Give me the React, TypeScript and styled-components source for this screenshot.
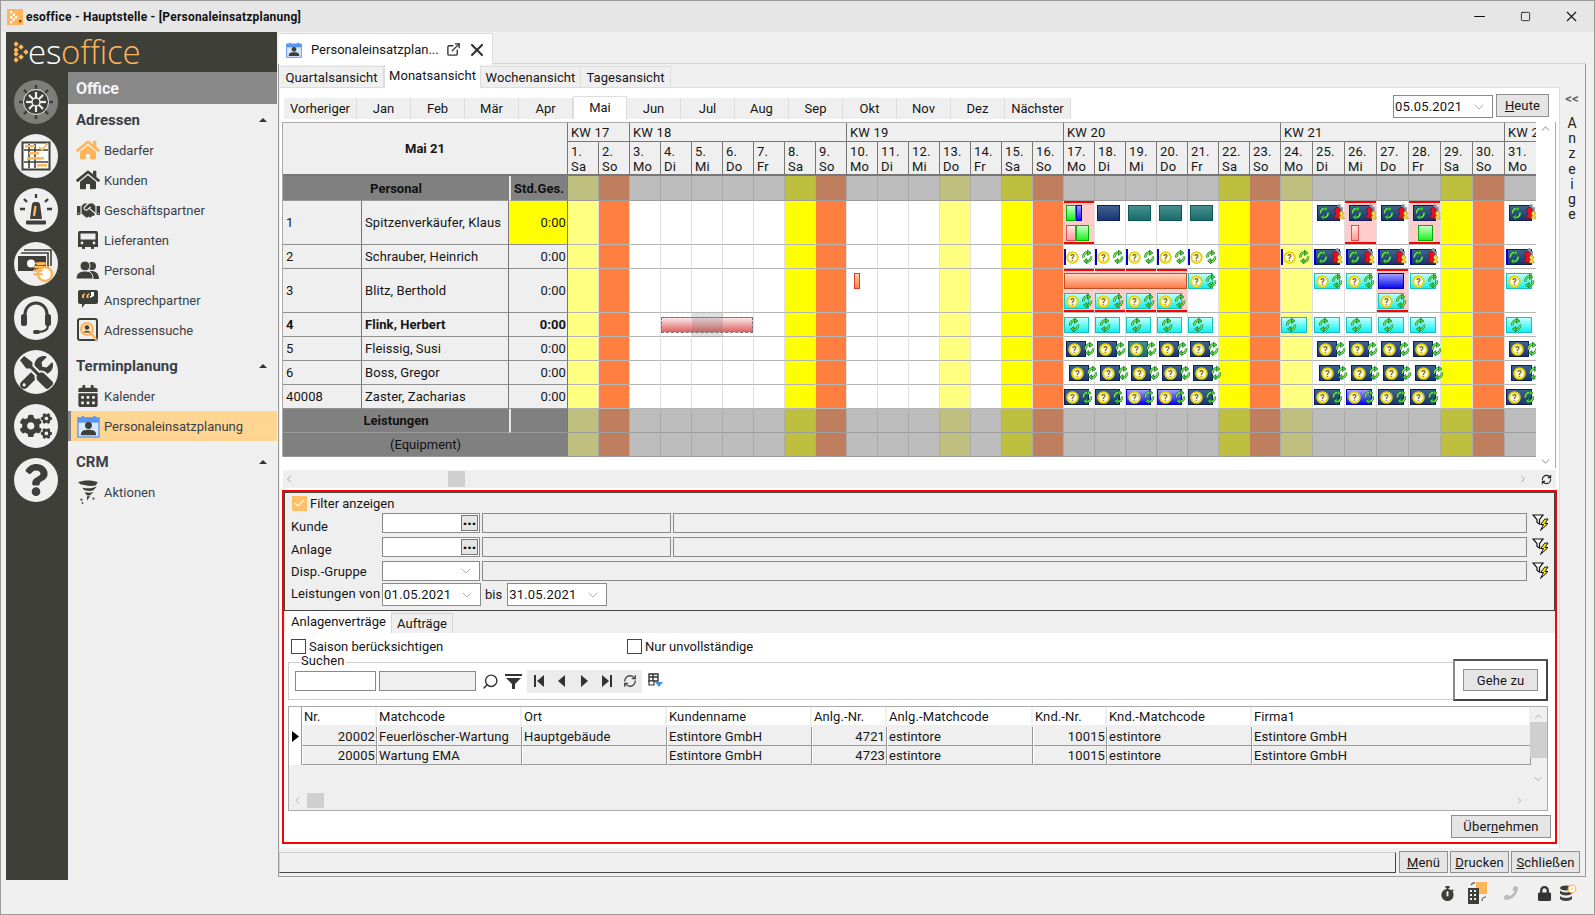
import React from "react";
import styled, { createGlobalStyle } from "styled-components";
import { ChevronUp, ChevronDown, ChevronLeft, ChevronRight, Check, X, Minus, Square, Search, RefreshCw, ExternalLink } from "lucide-react";
import { FaStopwatch, FaLock, FaPhoneAlt, FaTools, FaCogs, FaQuestion, FaHome, FaHandshake, FaCalendarAlt } from "react-icons/fa";

const GlobalStyle = createGlobalStyle`
  html, body { margin: 0; padding: 0; width: 1595px; height: 915px; overflow: hidden; background: #f0f0f0; }
  body { font-family: Roboto, "Liberation Sans", sans-serif; font-size: 13px; color: #151515; }
  * { box-sizing: border-box; }
`;

const DARK = "#3f3f3a";
const ORANGE = "#ffb55a";

const Win = styled.div`
  width: 1595px; height: 915px; border: 1px solid #9a9a9a; background: #f0f0f0;
  display: flex; flex-direction: column;
`;
const TitleBar = styled.div`
  height: 31px; flex: none; background: #e6e6e6; display: flex; align-items: center; padding-left: 6px;
`;
const TitleText = styled.div`
  margin-left: 3px; font-weight: 700; font-size: 12px; letter-spacing: 0.22px; color: #111; flex: 1;
`;
const WinCtl = styled.div`
  width: 46px; display: flex; justify-content: center; color: #111;
`;
const Body = styled.div`
  flex: 1; display: flex; padding-left: 5px; min-height: 0;
`;

/* Sidebar */
const Sidebar = styled.div`
  width: 271px; height: 848px; flex: none; display: flex; flex-direction: column;
`;
const LogoBar = styled.div`
  height: 40px; background: ${DARK}; display: flex; align-items: center; padding: 0 0 0 8px; gap: 0;
`;
const LogoText = styled.div`
  font-family: "Open Sans", Roboto, sans-serif; font-weight: 300; font-size: 33px; line-height: 40px; letter-spacing: -0.2px; color: #fff;
  span { color: ${ORANGE}; }
`;
const SideBody = styled.div`
  flex: 1; display: flex; min-height: 0;
`;
const Rail = styled.div`
  width: 62px; background: ${DARK}; display: flex; flex-direction: column; gap: 10px; padding: 8px 0 0 8px;
`;
const RailBtn = styled.div<{ $active?: boolean }>`
  width: 44px; height: 44px; border-radius: 50%; background: ${(p) => (p.$active ? "#7d7d7a" : "#efefef")};
  display: flex; align-items: center; justify-content: center; color: ${DARK}; flex: none;
`;
const Menu = styled.div`
  flex: 1; background: #efefef; display: flex; flex-direction: column;
`;
const MenuTop = styled.div`
  height: 32px; background: #888; color: #f4f4f4; font-weight: 700; font-size: 16px; display: flex; align-items: center; padding-left: 8px;
`;
const MenuHead = styled.div<{ $gap?: boolean }>`
  height: 30px; margin-top: ${(p) => (p.$gap ? "6px" : "1px")}; display: flex; align-items: center; padding: 0 10px 0 8px; justify-content: space-between;
  font-weight: 700; font-size: 15px; color: #3a3f48;
`;
const Caret = styled.div`
  width: 0; height: 0; border-left: 4px solid transparent; border-right: 4px solid transparent; border-bottom: 4px solid #333;
`;
const MenuItem = styled.div<{ $active?: boolean }>`
  height: 30px; display: flex; align-items: center; gap: 4px; padding-left: ${(p) => (p.$active ? "5px" : "8px")};
  background: ${(p) => (p.$active ? "#ffd591" : "transparent")};
  border-left: ${(p) => (p.$active ? "3px solid #888" : "0")};
  color: #3a3f4a; font-size: 13px;
`;
const MIcon = styled.div`
  width: 24px; height: 24px; display: flex; align-items: center; justify-content: center; color: ${DARK}; flex: none;
`;

/* Main */
const MainCol = styled.div`
  margin-left: 1px; width: 1308px; display: flex; flex-direction: column;
`;
const TabRow = styled.div`
  height: 32px; display: flex; flex: none;
`;
const DocTab = styled.div`
  width: 214px; margin-left: 1px; margin-top: 1px; height: 32px; background: #fff; border-top: 1px solid #ddd; border-right: 1px solid #ddd;
  display: flex; align-items: center; padding-left: 7px; position: relative; z-index: 1;
`;
const DocTitle = styled.div`
  margin-left: 9px; width: 133px; white-space: nowrap;
`;
const DocAct = styled.div`
  margin-left: 2px; display: flex; align-items: center; gap: 6px; color: #333;
`;
const TabRest = styled.div`
  flex: 1; border-bottom: 1px solid #d5d5d5;
`;
const Frame = styled.div`
  width: 1308px; height: 813px; flex: none; border-left: 1px solid #999; border-right: 1px solid #999; border-bottom: 1px solid #999;
  display: flex; flex-direction: column;
`;
const TopArea = styled.div`
  height: 784px; display: flex; flex: none;
`;
const TabCol = styled.div`
  width: 1281px; flex: none; display: flex; flex-direction: column;
`;
const SubTabs = styled.div`
  height: 23px; display: flex; padding: 2px 0 0 1px; flex: none;
`;
const SubTab = styled.div<{ $w: number; $active?: boolean }>`
  width: ${(p) => p.$w}px; display: flex; align-items: center; justify-content: center; letter-spacing: 0.05px;
  background: ${(p) => (p.$active ? "#fff" : "#efefef")};
  border-top: 1px solid #ddd; border-right: 1px solid #ddd;
  ${(p) => p.$active && "margin-top: -2px; height: 24px; padding-bottom: 2px; position: relative; border-left: 1px solid #ddd;"}
`;
const WhitePanel = styled.div`
  margin-left: 1px; flex: 1; background: #fff; border-top: 1px solid #ddd; border-right: 1px solid #ddd; padding-top: 6px; display: flex; flex-direction: column;
`;
const CalRow = styled.div`
  height: 25px; flex: none; display: flex; padding: 0 10px 0 4px;
`;
const CalTabs = styled.div`
  display: flex; flex: 1; padding-top: 4px;
`;
const CalTab = styled.div<{ $w: number; $active?: boolean }>`
  width: ${(p) => p.$w}px; display: flex; align-items: center; justify-content: center;
  background: ${(p) => (p.$active ? "#fff" : "#efefef")};
  border-right: 1px solid #ddd;
  ${(p) => (p.$active ? "margin-top:-2px; border-top:1px solid #ddd; border-left:1px solid #ddd; padding-bottom: 2px;" : "")}
`;
const Combo = styled.div<{ $w: number; $h?: number; $top?: number }>`
  width: ${(p) => p.$w}px; height: ${(p) => p.$h ?? 23}px; border: 1px solid #8a8a8a; background: #fff; display: flex; align-items: center;
  margin-top: ${(p) => p.$top ?? 0}px;
  justify-content: space-between; padding: 0 5px 0 1px; flex: none; color: #8a8a8a; letter-spacing: 0.2px;
  span { color: #151515; }
`;
const Btn = styled.div<{ $w: number; $h?: number }>`
  width: ${(p) => p.$w}px; height: ${(p) => p.$h ?? 23}px; flex: none; background: #e5e5e5; border: 1px solid #8f8f8f;
  display: flex; align-items: center; justify-content: center; letter-spacing: 0.15px;
`;
const HeuteWrap = styled.div`
  margin-left: 3px;
`;

/* Grid */
const GridArea = styled.div`
  height: 348px; flex: none; margin: 3px 3px 0 3px; display: flex;
`;
const Gantt = styled.div`
  display: grid; height: 335px; border-left: 1px solid #aaa; border-top: 1px solid #aaa; margin-left: -1px;
  grid-template-columns: 79px 147px 59px repeat(23, 31px) repeat(8, 32px);
  grid-template-rows: 19px 34px 25px 44px 24px 44px 24px 24px 24px 24px 24px 24px;
  overflow: hidden; width: 1255px;
`;
const HeadCorner = styled.div`
  grid-column: 1 / span 3; grid-row: 1 / span 2; background: #efefef; display: flex; align-items: center; justify-content: center;
  font-weight: 700; border-bottom: 2px solid #777; border-right: 1px solid #777;
`;
const KwCell = styled.div<{ $span: number }>`
  grid-column: span ${(p) => p.$span}; background: #efefef; border-right: 1px solid #777; border-bottom: 1px solid #777;
  display: flex; align-items: center; padding-left: 3px; white-space: nowrap; overflow: hidden; letter-spacing: 0.2px;
`;
const DayHead = styled.div`
  background: #efefef; border-right: 1px solid #777; border-bottom: 2px solid #777; padding: 2px 0 0 3px; line-height: 15px; letter-spacing: 0.2px;
`;
const GrayHead = styled.div<{ $span: number; $bold?: boolean; $sep?: boolean }>`
  grid-column: span ${(p) => p.$span}; background: #808080; display: flex; align-items: center; justify-content: center;
  font-weight: ${(p) => (p.$bold ? 700 : 400)}; border-bottom: 1px solid #999; color: #111;
  ${(p) => (p.$sep ? "border-left: 2px solid #e8e8e8; border-right: 1px solid #777;" : "")}
`;
const LeftCell = styled.div<{ $bold?: boolean; $right?: boolean; $hi?: boolean }>`
  background: ${(p) => (p.$hi ? "#ffff00" : "#efefef")}; border-right: 1px solid #777; border-bottom: 1px solid #909090;
  display: flex; align-items: center; padding: 0 ${(p) => (p.$right ? "1px" : "3px")} 0 3px; justify-content: ${(p) => (p.$right ? "flex-end" : "flex-start")};
  font-weight: ${(p) => (p.$bold ? 700 : 400)}; letter-spacing: 0.08px; white-space: nowrap;
`;
const tint = { n: "#fff", h: "#ffff80", s: "#ffff00", u: "#ff7f40" };
const greyTint = { n: "#bdbdbd", h: "#bfbf80", s: "#bfbf3f", u: "#bf7f5f" };
const DayCell = styled.div<{ $bg: string; $pink?: boolean; $grey?: boolean }>`
  background: ${(p) => (p.$pink ? "#ffcccc" : p.$bg)};
  border-right: 1px solid ${(p) => (p.$grey ? "#aaa" : "#e0e0e0")};
  border-bottom: 1px solid ${(p) => (p.$grey ? "#9c9c9c" : "#b5b5b5")};
  ${(p) => (p.$pink ? "box-shadow: inset 0 2px 0 #f00, inset 0 -2px 0 #f00;" : "")}
  padding-top: 4px; display: flex; flex-direction: column; gap: 4px;
`;
const EvLine = styled.div`
  display: flex; height: 16px; flex: none;
`;
const toneCss: Record<string, string> = {
  navy: "border: 1px solid #0c1f5a; background: linear-gradient(#3f6290,#1a3572);",
  teal: "border: 1px solid #0a5a5a; background: linear-gradient(#468f8f,#1c6c6c);",
  blue: "border: 1px solid #0000c0; background: linear-gradient(#a0a0ff,#0808e8);",
  cyan: "border: 1px solid #14c0c0; background: linear-gradient(#c4ffff,#10f0f0);",
  green: "border: 1px solid #00b000; background: linear-gradient(#c8ffc8,#20f020);",
  sblue: "border: 1px solid #0000c0; background: linear-gradient(#a0a0ff,#1010f0);",
  pink: "border: 1px solid #e05050; background: linear-gradient(#ffe8e8,#ff9a9a);",
  orange: "border: 1px solid #c05020; background: linear-gradient(#ffd8c0,#ff7a48);",
  small: "border: 1px solid #e04020; background: linear-gradient(#ffd0a0,#ff8050);",
  dash: "border: 1px dashed #777; background: linear-gradient(#fbe6e6,#dd6060);",
  none: "",
};
const EvBar = styled.div<{ $tone: string; $x: number; $w: number; $stripe?: boolean; $pad: number }>`
  position: relative; z-index: 2; flex: none; margin-left: ${(p) => p.$x}px; width: ${(p) => p.$w}px; height: 16px;
  display: flex; align-items: center; padding-left: ${(p) => p.$pad}px; gap: 3px;
  ${(p) => toneCss[p.$tone]}
  ${(p) => (p.$stripe ? "border-left: 2px solid #0000d0;" : "")}
  svg { flex: none; }
`;
const DayTint = styled.div`
  position: absolute; left: 30px; top: -5px; width: 31px; height: 24px; background: rgba(120,120,120,0.24);
`;
const VScroll = styled.div`
  width: 20px; height: 346px; border-right: 1px solid #aaa; display: flex; flex-direction: column; justify-content: space-between; align-items: center; color: #b0b0b0; padding: 0;
`;
const HScrollBar = styled.div`
  height: 18px; flex: none; margin: 0 3px; background: #efefef; display: flex; align-items: center; color: #aaa;
`;
const HThumb = styled.div<{ $m: number; $w: number; $h: number }>`
  margin-left: ${(p) => p.$m}px; width: ${(p) => p.$w}px; height: ${(p) => p.$h}px; background: #cfcfcf; flex: none;
`;
const Spacer = styled.div`
  flex: 1;
`;
const RedBox = styled.div`
  height: 354px; flex: none; margin: 2px 2px 4px 2px; border: 2px solid #f00; display: flex; flex-direction: column; background: #fff;
`;
const FilterPanel = styled.div`
  height: 119px; flex: none; background: #efefef; border: 1px solid #444; padding: 2px 4px 0 6px; display: flex; flex-direction: column; gap: 4px;
`;
const FCheckRow = styled.div`
  display: flex; align-items: center; height: 16px; gap: 3px; padding-left: 1px; margin-bottom: -2px;
`;
const OrangeCheck = styled.div`
  width: 15px; height: 15px; background: #ffbf66; color: #fff; display: flex; align-items: center; justify-content: center;
`;
const FRow = styled.div<{ $h?: number; $mt?: number }>`
  display: flex; align-items: center; height: ${(p) => p.$h ?? 20}px; flex: none; gap: 2px; margin-top: ${(p) => p.$mt ?? 0}px;
`;
const FLabel = styled.div<{ $pt?: number; $pb?: number }>`
  width: 89px; flex: none; letter-spacing: 0.1px; white-space: nowrap; padding-top: ${(p) => p.$pt ?? 0}px; padding-bottom: ${(p) => p.$pb ?? 0}px;
`;
const Input = styled.div<{ $w: number; $off?: boolean; $h?: number; $ml?: number }>`
  ${(p) => (p.$w ? `width: ${p.$w}px;flex: none;` : "flex: 1;")} height: ${(p) => p.$h ?? 20}px; border: 1px solid #8a8a8a; background: ${(p) => (p.$off ? "#efefef" : "#fff")};
  margin-left: ${(p) => p.$ml ?? 0}px;
  display: flex; justify-content: flex-end; align-items: stretch;
`;
const DotsBtn = styled.div`
  width: 17px; background: #e5e5e5; border: 1px solid #777; font-weight: 900; font-size: 15px; line-height: 9px; text-align: center; margin: 1px; color: #000; overflow: hidden;
`;
const FIconWrap = styled.div`
  margin-left: 3px; display: flex; align-items: center; width: 18px; flex: none;
`;
const BisLabel = styled.div`
  margin: 0 3px 0 2px;
`;
const InnerTabs = styled.div`
  height: 22px; flex: none; background: #efefef; display: flex; padding: 2px 0 0 2px;
`;
const InnerTab = styled.div<{ $w: number; $active?: boolean }>`
  width: ${(p) => p.$w}px; display: flex; align-items: center; justify-content: center;
  background: ${(p) => (p.$active ? "#fff" : "#efefef")};
  ${(p) => (p.$active ? "margin-top:-2px; padding-bottom: 2px;" : "border: 1px solid #d5d5d5; border-bottom: 0;")}
`;
const OptionRow = styled.div`
  height: 15px; margin: 6px 0 0 7px; display: flex; align-items: center; flex: none;
`;
const CheckOpt = styled.div<{ $w?: number }>`
  display: flex; align-items: center; gap: 3px; ${(p) => (p.$w ? `width: ${p.$w}px;` : "")}
`;
const CheckBox = styled.div`
  width: 15px; height: 15px; background: #fff; border: 1px solid #444;
`;
const SearchRow = styled.div`
  display: flex; margin: 5px 7px 0 4px; flex: none; height: 42px;
`;
const Group = styled.div`
  position: relative; margin-top: 3px; height: 38px; width: 1166px; border: 1px solid #ccc; border-right: 0; display: flex; align-items: center; padding-left: 6px;
`;
const Legend = styled.div`
  position: absolute; left: 11px; top: -9px; background: #fff; line-height: 14px; padding: 0 1px; letter-spacing: 0.1px;
`;
const ToolIcons = styled.div`
  margin-left: 6px; display: flex; align-items: center; gap: 6px; color: #333;
`;
const NavGroup = styled.div`
  margin-left: 5px; height: 23px; width: 115px; background: #ececec; display: flex; align-items: center; justify-content: space-around; padding: 0 1px;
`;
const GoBox = styled.div`
  width: 95px; height: 42px; flex: none; background: #fff; border: 2px solid #444; border-left-color: #888; border-top-color: #555;
  display: flex; align-items: center; justify-content: center;
`;
const TableWrap = styled.div`
  margin: 5px 7px 0 4px; height: 105px; flex: none; background: #efefef; border: 1px solid #aaa; display: flex;
`;
const TableMain = styled.div`
  flex: 1; display: flex; flex-direction: column; min-width: 0;
`;
const TGrid = styled.div`
  display: grid; grid-template-columns: 13px 75px 145px 145px 145px 75px 146px 74px 145px 279px;
  grid-template-rows: 20px 19px 19px; flex: none; background: #efefef;
`;
const THead = styled.div`
  background: #fff; border-right: 2px solid #efefef; border-bottom: 2px solid #efefef; display: flex; align-items: center; padding-left: 2px; letter-spacing: 0.1px;
`;
const TIndicator = styled.div`
  display: flex; align-items: center; justify-content: center; border-right: 1px solid #999; background: #fff;
`;
const TCell = styled.div<{ $r?: boolean }>`
  border-right: 1px solid #999; border-bottom: 1px solid #999; display: flex; align-items: center; padding: 0 1px 0 1px;
  justify-content: ${(p) => (p.$r ? "flex-end" : "flex-start")}; letter-spacing: 0.12px; border-left: 1px solid #fff; white-space: nowrap;
`;
const TScroll = styled.div`
  height: 18px; margin-top: auto; margin-bottom: 1px; display: flex; align-items: center; color: #aaa; padding-left: 3px; flex: none;
`;
const TVScroll = styled.div`
  width: 18px; flex: none; display: flex; flex-direction: column; align-items: center; color: #aaa; padding-top: 4px;
`;
const TVThumb = styled.div`
  width: 17px; height: 36px; background: #cfcfcf; flex: none;
`;
const DownArrow = styled.div`
  margin-top: 15px;
`;
const ApplyRow = styled.div`
  display: flex; justify-content: flex-end; margin: 4px 4px 0 0; flex: none;
`;
const AnzeigeRail = styled.div`
  flex: 1; display: flex; flex-direction: column; align-items: center; padding: 27px 1px 0 0; color: #222;
`;
const Chevs = styled.div`
  font-size: 13px; font-weight: 700; color: #666; height: 25px; line-height: 16px; letter-spacing: 0;
`;
const VLetter = styled.div`
  line-height: 15.2px; font-size: 14px;
`;
const BottomBar = styled.div`
  height: 28px; flex: none; display: flex; padding-top: 3px; gap: 2px;
`;
const StatusBox = styled.div`
  width: 1117px; height: 21px; margin-top: 1px; border: 1px solid #d0d0d0; border-bottom-color: #444; border-right-color: #444; margin-right: 1px;
`;
const Footer = styled.div`
  flex: 1; display: flex; align-items: center; padding-bottom: 5px; padding-left: 1159px;
`;
const FootIcon = styled.div<{ $w: number; $ml?: number }>`
  width: ${(p) => p.$w}px; margin-left: ${(p) => p.$ml ?? 0}px; display: flex; justify-content: center; flex: none;
`;

/* ---- small drawings ---- */
const SyncG = ({ x = 0 }: { x?: number }) => (
  <g transform={`translate(${x} 1.5)`}>
    <g fill="none">
      <path d="M1.5 7 A4.2 4.2 0 0 1 7 2.2" stroke="#0c6a12" strokeWidth="2.4" />
      <path d="M9 6 A4.2 4.2 0 0 1 3.5 10.8" stroke="#0c6a12" strokeWidth="2.4" />
      <path d="M1.5 7 A4.2 4.2 0 0 1 7 2.2" stroke="#7aea5a" strokeWidth="1.5" />
      <path d="M9 6 A4.2 4.2 0 0 1 3.5 10.8" stroke="#7aea5a" strokeWidth="1.5" />
    </g>
    <path d="M5.5 -0.5 L9 2.6 L5.5 5 Z" fill="#4ad03f" stroke="#0c6a12" strokeWidth=".6" />
    <path d="M5 13.5 L1.5 10.4 L5 8 Z" fill="#4ad03f" stroke="#0c6a12" strokeWidth=".6" />
  </g>
);
const Sync = () => (
  <svg width="11" height="16" viewBox="0 0 11 16" style={{ overflow: "visible" }}><SyncG /></svg>
);
const Q = () => (
  <svg width="13" height="13" viewBox="0 0 13 13">
    <circle cx="6.5" cy="6.5" r="5.3" fill="#fffbe4" stroke="#e6d410" strokeWidth="2" />
    <text x="6.5" y="9.6" textAnchor="middle" fontSize="9" fontWeight="700" fill="#7a6a00" fontFamily="Roboto, sans-serif">?</text>
  </svg>
);
const Full = () => (
  <svg width="32" height="16" viewBox="0 0 32 16" style={{ overflow: "visible" }}>
    <SyncG x={0} />
    <path d="M22 2 a2 2 0 1 1 4 0 v2 h3 l-1 9 h-6 z" fill="#8a94a4" transform="translate(1 -1) scale(.8)" />
    <path d="M15.5 13.5 v-3 l1.6 -2.5 a3 3 0 1 1 2.8 0 l1.6 2.5 v3 z" fill="#e8101c" stroke="#4a0a0a" strokeWidth=".5" />
    <path d="M20.5 14 v-2 l1.2 -1.6 a2.2 2.2 0 1 1 2.2 0 l1.2 1.6 v2 z" fill="#ecd94a" stroke="#8a7a10" strokeWidth=".4" />
  </svg>
);
const icons = {
  q: <><Q /><Sync /></>,
  s: <Sync />,
  f: <Full />,
};

type Ev = { t: string; x?: number; w: number; i?: "q" | "s" | "f"; st?: boolean };
type Cell = { pink?: boolean; lines: (Ev | null)[] };

const ev = (t: string, x: number, w: number, i?: "q" | "s" | "f", st?: boolean): Ev => ({ t, x, w, i, st });
const one = (e: Ev): Cell => ({ lines: [e] });

const rowData: Record<number, Cell>[] = [
  {
    17: { pink: true, lines: [null, null] },
    18: one(ev("navy", 2, 23)), 19: one(ev("teal", 2, 23)), 20: one(ev("teal", 2, 23)), 21: one(ev("teal", 2, 23)),
    25: one(ev("navy", 4, 23, "f")),
    26: { pink: true, lines: [ev("navy", 4, 23, "f"), ev("pink", 6, 8)] },
    27: one(ev("navy", 4, 23, "f")),
    28: { pink: true, lines: [ev("navy", 4, 23, "f"), ev("green", 9, 15)] },
    31: one(ev("navy", 4, 23, "f")),
  },
  {
    17: one(ev("none", 0, 24, "q", true)), 18: one(ev("none", 0, 24, "q", true)), 19: one(ev("none", 0, 24, "q", true)),
    20: one(ev("none", 0, 24, "q", true)), 21: one(ev("none", 0, 24, "q", true)), 24: one(ev("none", 0, 24, "q", true)),
    25: one(ev("navy", 1, 26, "f", true)), 26: one(ev("navy", 1, 26, "f", true)), 27: one(ev("navy", 1, 26, "f", true)),
    28: one(ev("navy", 1, 26, "f", true)), 31: one(ev("navy", 1, 26, "f", true)),
  },
  {
    10: one(ev("small", 7, 6)),
    17: { pink: true, lines: [ev("orange", 0, 123), ev("cyan", 0, 25, "q")] },
    18: { pink: true, lines: [null, ev("cyan", 0, 25, "q")] },
    19: { pink: true, lines: [null, ev("cyan", 0, 25, "q")] },
    20: { pink: true, lines: [null, ev("cyan", 0, 25, "q")] },
    21: one(ev("cyan", 0, 25, "q")),
    25: one(ev("cyan", 1, 26, "q")), 26: one(ev("cyan", 1, 26, "q")),
    27: { pink: true, lines: [ev("blue", 1, 26), ev("cyan", 1, 26, "q")] },
    28: one(ev("cyan", 1, 26, "q")), 31: one(ev("cyan", 1, 26, "q")),
  },
  {
    4: one(ev("dash", 0, 92)),
    17: one(ev("cyan", 0, 25, "s")), 18: one(ev("cyan", 0, 25, "s")), 19: one(ev("cyan", 0, 25, "s")),
    20: one(ev("cyan", 0, 25, "s")), 21: one(ev("cyan", 0, 25, "s")),
    24: one(ev("cyan", 0, 26, "s")), 25: one(ev("cyan", 1, 26, "s")), 26: one(ev("cyan", 1, 26, "s")),
    27: one(ev("cyan", 1, 26, "s")), 28: one(ev("cyan", 1, 26, "s")), 31: one(ev("cyan", 1, 26, "s")),
  },
  {
    17: one(ev("navy", 2, 20, "q")), 18: one(ev("navy", 2, 20, "q")), 19: one(ev("teal", 2, 20, "q")),
    20: one(ev("navy", 2, 20, "q")), 21: one(ev("navy", 2, 20, "q")),
    25: one(ev("navy", 4, 20, "q")), 26: one(ev("navy", 4, 20, "q")), 27: one(ev("navy", 4, 20, "q")),
    28: one(ev("navy", 4, 20, "q")), 31: one(ev("navy", 4, 20, "q")),
  },
  {
    17: one(ev("navy", 5, 20, "q")), 18: one(ev("navy", 5, 20, "q")), 19: one(ev("navy", 5, 20, "q")),
    20: one(ev("navy", 5, 20, "q")), 21: one(ev("navy", 5, 20, "q")),
    25: one(ev("navy", 6, 21, "q")), 26: one(ev("navy", 6, 21, "q")), 27: one(ev("navy", 6, 21, "q")),
    28: one(ev("navy", 6, 21, "q")), 31: one(ev("navy", 6, 21, "q")),
  },
  {
    17: one(ev("navy", 0, 25, "q")), 18: one(ev("navy", 0, 25, "q")), 19: one(ev("blue", 0, 25, "q")),
    20: one(ev("blue", 0, 25, "q")), 21: one(ev("navy", 0, 25, "q")),
    25: one(ev("navy", 1, 26, "q")), 26: one(ev("blue", 1, 26, "q")), 27: one(ev("navy", 1, 26, "q")),
    28: one(ev("navy", 1, 26, "q")), 31: one(ev("navy", 1, 26, "q")),
  },
];

const persons = [
  { id: "1", name: "Spitzenverkäufer, Klaus", hi: true },
  { id: "2", name: "Schrauber, Heinrich" },
  { id: "3", name: "Blitz, Berthold" },
  { id: "4", name: "Flink, Herbert", bold: true },
  { id: "5", name: "Fleissig, Susi" },
  { id: "6", name: "Boss, Gregor" },
  { id: "40008", name: "Zaster, Zacharias" },
];

const wd = ["Sa", "So", "Mo", "Di", "Mi", "Do", "Fr"];
const days = Array.from({ length: 31 }, (_, i) => ({ n: i + 1, w: wd[i % 7] }));
const kindOf = (d: number): keyof typeof tint =>
  [1, 13, 24].includes(d) ? "h" : [8, 15, 22, 29].includes(d) ? "s" : [2, 9, 16, 23, 30].includes(d) ? "u" : "n";

const EvView = ({ e }: { e: Ev }) => (
  <EvBar $tone={e.t} $x={e.x ?? 0} $w={e.w} $stripe={e.st} $pad={e.i === "s" ? 4 : e.t === "none" ? 0 : 1}>
    {e.i ? icons[e.i] : null}
    {e.t === "dash" ? <DayTint /> : null}
  </EvBar>
);

const ComboArrow = () => <ChevronDown size={16} strokeWidth={1} />;

const FilterIcon = () => (
  <svg width="18" height="18" viewBox="0 0 18 18">
    <path d="M1 1 H11 L7.5 5.5 V10 L5 8.5 V5.5 Z" fill="#fff" stroke="#111" strokeWidth="1.2" />
    <path d="M13 5 L8.5 10.5 H11.5 L8.5 16.5 L16 9.5 H13 L16 5 Z" fill="#ffee00" stroke="#111" strokeWidth="1" />
  </svg>
);

const NavIcon = ({ d }: { d: string }) => (
  <svg width="14" height="14" viewBox="0 0 14 14"><path d={d} fill="#333" /></svg>
);

const GridFilterIcon = () => (
  <svg width="16" height="16" viewBox="0 0 16 16">
    <path d="M1 1 H10 V8 H1 Z M1 4 H10 M5 1 V8" fill="#fff" stroke="#333" strokeWidth="1.4" />
    <path d="M1 8 H6 V12 H1 Z" fill="#fff" stroke="#333" strokeWidth="1.2" />
    <path d="M7 9 H15 L11 14 Z" fill="#4a90e2" />
  </svg>
);

/* Sidebar drawings */
const Wheel = () => (
  <svg width="36" height="36" viewBox="0 0 36 36">
    <g stroke={DARK} strokeWidth="2.5">
      {[0, 45, 90, 135, 180, 225, 270, 315].map((a) => (
        <line key={a} x1="18" y1="5" x2="18" y2="1" transform={`rotate(${a} 18 18)`} />
      ))}
    </g>
    <circle cx="18" cy="18" r="12.5" fill={DARK} stroke="#e8e8e8" strokeWidth="1" />
    <g stroke="#eee" strokeWidth="2.2">
      {[0, 45, 90, 135].map((a) => (
        <line key={a} x1="18" y1="8" x2="18" y2="28" transform={`rotate(${a} 18 18)`} />
      ))}
    </g>
    <circle cx="18" cy="18" r="4" fill={DARK} stroke="#eee" strokeWidth="1.4" />
  </svg>
);
const Board = () => (
  <svg width="30" height="30" viewBox="0 0 30 30">
    <rect x="1.5" y="1.5" width="27" height="27" fill="#fff" stroke={DARK} strokeWidth="2" />
    <g stroke={DARK} strokeWidth="1.6"><path d="M8 3 V27 M14 3 V27 M3 9 H27 M3 21 H27" /></g>
    <g fill={ORANGE}><rect x="4" y="4" width="10" height="2.6" /><rect x="8" y="11" width="10" height="2.6" /><rect x="6" y="16" width="17" height="2.6" /><rect x="16" y="23" width="10" height="2.6" /></g>
    <path d="M18 6 l3 3 l6 -7" fill="none" stroke={ORANGE} strokeWidth="1.8" />
  </svg>
);
const Siren = () => (
  <svg width="34" height="34" viewBox="0 0 34 34">
    <path d="M11 26 L13 11 A3 3 0 0 1 16 9 H18 A3 3 0 0 1 21 11 L23 26 Z" fill={DARK} />
    <rect x="7" y="27.5" width="20" height="4" rx="1" fill={DARK} />
    <path d="M16.5 13 L15 23" stroke={ORANGE} strokeWidth="2.4" />
    <g stroke={DARK} strokeWidth="2.4"><path d="M17 1 V5 M5 6 L8 9 M29 6 L26 9 M1 16 H6 M28 16 H33" /></g>
  </svg>
);
const Money = () => (
  <svg width="38" height="38" viewBox="0 0 38 38">
    <g fill="none" stroke={DARK} strokeWidth="1.6"><path d="M7 5 H34 V21 M4 8 H31 V24" /></g>
    <rect x="1" y="11" width="28" height="15" fill={DARK} />
    <ellipse cx="14" cy="18.5" rx="4" ry="4" fill="#fff" />
    <circle cx="28" cy="29" r="7" fill="#fff" stroke={ORANGE} strokeWidth="2.5" />
    <g fill={ORANGE}><ellipse cx="24" cy="18.5" rx="6" ry="1.6" /><ellipse cx="22" cy="22" rx="6" ry="1.6" /><ellipse cx="21" cy="25.5" rx="5" ry="1.6" /><ellipse cx="21" cy="29" rx="5" ry="1.6" /></g>
  </svg>
);
const Headset = () => (
  <svg width="34" height="34" viewBox="0 0 34 34">
    <path d="M6 19 V13 A11 11 0 0 1 28 13 V19" fill="none" stroke={DARK} strokeWidth="3" />
    <rect x="2" y="13" width="6" height="12" rx="2.5" fill={DARK} />
    <rect x="26" y="13" width="6" height="12" rx="2.5" fill={DARK} />
    <path d="M29 24 C29 29 25 31 19 31" fill="none" stroke={DARK} strokeWidth="2.2" />
    <rect x="14" y="29" width="7" height="4" rx="2" fill={DARK} />
  </svg>
);
const Truck = () => (
  <svg width="22" height="20" viewBox="0 0 22 20">
    <path d="M3 1 H19 A2 2 0 0 1 21 3 V17 H17 V19 H14 V17 H8 V19 H5 V17 H1 V3 A2 2 0 0 1 3 1 Z" fill={DARK} />
    <rect x="3.5" y="3.5" width="15" height="6" fill="#efefef" />
    <circle cx="5" cy="13" r="1.4" fill="#efefef" /><circle cx="17" cy="13" r="1.4" fill="#efefef" />
  </svg>
);
const People = () => (
  <svg width="24" height="20" viewBox="0 0 24 20">
    <circle cx="16" cy="6" r="4" fill={DARK} /><path d="M11 19 C11 13 13 11 16 11 C19 11 23 13 23 19 Z" fill={DARK} />
    <circle cx="9" cy="6" r="5" fill={DARK} stroke="#efefef" /><path d="M0 19 C0 13 4 11 9 11 C14 11 17 13 17 19 Z" fill={DARK} stroke="#efefef" />
  </svg>
);
const Quote = () => (
  <svg width="22" height="22" viewBox="0 0 22 22">
    <path d="M3 1 H19 A2 2 0 0 1 21 3 V13 A2 2 0 0 1 19 15 H8 L5 19 V15 H3 A2 2 0 0 1 1 13 V3 A2 2 0 0 1 3 1 Z" fill={DARK} />
    <g fill={ORANGE}><path d="M5 9 V6 L8 4 V6 H7 V9 Z M9.5 9 V6 L12.5 4 V6 H11.5 V9 Z" /></g>
    <g fill="#fff"><path d="M17 3 V7 L13 9 V7 H14 V3 Z" /></g>
  </svg>
);
const AddrSearch = () => (
  <svg width="22" height="24" viewBox="0 0 22 24">
    <rect x="1" y="1" width="19" height="21" rx="2" fill="#efefef" stroke={DARK} strokeWidth="2" />
    <circle cx="10" cy="11" r="6" fill="#ffdca8" stroke={ORANGE} strokeWidth="2" />
    <circle cx="10" cy="9.5" r="2.2" fill={DARK} /><path d="M6.5 14.5 C7 12.5 13 12.5 13.5 14.5 Z" fill={DARK} />
    <path d="M14.5 16 L19.5 22" stroke={ORANGE} strokeWidth="2.4" />
  </svg>
);
const Tornado = () => (
  <svg width="22" height="24" viewBox="0 0 20 22">
    <g fill={DARK}>
      <path d="M1 2 C6 0 14 0 19 2 L17 5 C12 6 7 5 3 4 Z" />
      <path d="M5 7 C8 8 13 8 18 6 L15 9.5 C12 10.5 8 10 6 9 Z" />
      <path d="M7 11 C10 12 12 12 15 11 L12 14 C10 14.5 9 14 8 13 Z" />
      <path d="M9 15 L12 15 L9 19 Z" />
      <circle cx="4" cy="18" r="1" /><circle cx="15" cy="17" r="1" /><circle cx="5" cy="21" r=".8" />
    </g>
  </svg>
);
const PersonCal = ({ s }: { s: number }) => (
  <svg width={s} height={s} viewBox="0 0 24 24">
    <rect x="1" y="3" width="22" height="20" fill="#d8e8ff" stroke="#5a96ef" strokeWidth="1.4" />
    <rect x="1" y="3" width="22" height="5" fill="#5a96ef" />
    <rect x="5" y="1" width="2.4" height="4.5" fill="#5a96ef" /><rect x="17" y="1" width="2.4" height="4.5" fill="#5a96ef" />
    <circle cx="12" cy="11" r="3.6" fill={DARK} /><path d="M4 21 C4 16 8 15.5 12 15.5 C16 15.5 20 16 20 21 Z" fill={DARK} />
  </svg>
);
const Building = () => (
  <svg width="22" height="24" viewBox="0 0 22 24">
    <rect x="9" y="1" width="11" height="12" fill={ORANGE} />
    <rect x="1" y="7" width="11" height="16" fill={DARK} />
    <g fill="#f0f0f0"><rect x="3" y="9" width="2" height="2" /><rect x="7" y="9" width="2" height="2" /><rect x="3" y="13" width="2" height="2" /><rect x="7" y="13" width="2" height="2" /><rect x="3" y="17" width="2" height="2" /><rect x="7" y="17" width="2" height="2" /></g>
    <path d="M4 4 A4 4 0 0 1 8 2 M15 20 A4 4 0 0 1 19 16" fill="none" stroke="#555" strokeWidth="1.2" />
  </svg>
);
const Db = () => (
  <svg width="18" height="18" viewBox="0 0 18 18">
    <ellipse cx="7" cy="4" rx="6" ry="2.6" fill={DARK} />
    <path d="M1 6.5 C3 9 11 9 13 6.5 V9.5 C11 12 3 12 1 9.5 Z" fill={DARK} />
    <path d="M1 12 C3 14.5 11 14.5 13 12 V15 C11 17.5 3 17.5 1 15 Z" fill={DARK} />
    <circle cx="13" cy="5" r="3.8" fill="#fff" stroke={ORANGE} strokeWidth="1.2" />
    <path d="M13 3 V5 H15" fill="none" stroke={ORANGE} strokeWidth=".9" />
  </svg>
);
const LogoMark = () => (
  <svg width="14" height="22" viewBox="0 0 14 22">
    <g fill={ORANGE}>
      {[[2, 3], [7, 6], [12, 11], [7, 16], [2, 19], [2, 9], [2, 13]].map(([x, y], i) => (
        <rect key={i} x={x - 2} y={y - 2} width="4" height="4" transform={`rotate(45 ${x} ${y})`} />
      ))}
    </g>
  </svg>
);
const TitleIcon = () => (
  <svg width="16" height="16" viewBox="0 0 16 16">
    <rect width="16" height="16" fill="#ffb55a" />
    <g fill="#fff"><rect x="3" y="2" width="2.4" height="2.4" /><rect x="5.6" y="4.6" width="2.4" height="2.4" /><rect x="8" y="7" width="2.4" height="2.4" /><rect x="5.6" y="9.4" width="2.4" height="2.4" /><rect x="3" y="12" width="2.4" height="2.4" /><rect x="3" y="7" width="2.4" height="2.4" /></g>
    <rect x="12" y="11" width="2.4" height="2.4" fill="#7a5a20" />
  </svg>
);

const months = ["Jan", "Feb", "Mär", "Apr", "Mai", "Jun", "Jul", "Aug", "Sep", "Okt", "Nov", "Dez"];

const tableCols = ["Nr.", "Matchcode", "Ort", "Kundenname", "Anlg.-Nr.", "Anlg.-Matchcode", "Knd.-Nr.", "Knd.-Matchcode", "Firma1"];
const tableRows = [
  ["20002", "Feuerlöscher-Wartung", "Hauptgebäude", "Estintore GmbH", "4721", "estintore", "10015", "estintore", "Estintore GmbH"],
  ["20005", "Wartung EMA", "", "Estintore GmbH", "4723", "estintore", "10015", "estintore", "Estintore GmbH"],
];
const rightCols = [0, 4, 6];

const renderDayCells = (r: number) => {
  const data = rowData[r];
  return days.map((d) => {
    const c = data[d.n];
    const kind = kindOf(d.n);
    return (
      <DayCell key={d.n} $bg={tint[kind]} $pink={c?.pink}>
        {r === 0 && d.n === 17 ? (
          <>
            <EvLine>
              <EvBar $tone="green" $x={2} $w={10} $pad={0} />
              <EvBar $tone="sblue" $x={0} $w={6} $pad={0} />
            </EvLine>
            <EvLine>
              <EvBar $tone="pink" $x={2} $w={10} $pad={0} />
              <EvBar $tone="green" $x={0} $w={13} $pad={0} />
            </EvLine>
          </>
        ) : c ? (
          c.lines.map((e, i) => <EvLine key={i}>{e ? <EvView e={e} /> : null}</EvLine>)
        ) : null}
      </DayCell>
    );
  });
};

export default function App() {
  return (
    <>
      <GlobalStyle />
      <Win>
        <TitleBar>
          <TitleIcon />
          <TitleText>esoffice - Hauptstelle - [Personaleinsatzplanung]</TitleText>
          <WinCtl><Minus size={17} strokeWidth={1.5} /></WinCtl>
          <WinCtl><Square size={11} strokeWidth={1.8} /></WinCtl>
          <WinCtl><X size={17} strokeWidth={1.5} /></WinCtl>
        </TitleBar>
        <Body>
          <Sidebar>
            <LogoBar>
              <LogoMark />
              <LogoText>es<span>office</span></LogoText>
            </LogoBar>
            <SideBody>
              <Rail>
                <RailBtn $active><Wheel /></RailBtn>
                <RailBtn><Board /></RailBtn>
                <RailBtn><Siren /></RailBtn>
                <RailBtn><Money /></RailBtn>
                <RailBtn><Headset /></RailBtn>
                <RailBtn><FaTools size={33} /></RailBtn>
                <RailBtn><FaCogs size={32} /></RailBtn>
                <RailBtn><FaQuestion size={32} /></RailBtn>
              </Rail>
              <Menu>
                <MenuTop>Office</MenuTop>
                <MenuHead>Adressen<Caret /></MenuHead>
                <MenuItem><MIcon><FaHome size={24} color={ORANGE} /></MIcon>Bedarfer</MenuItem>
                <MenuItem><MIcon><FaHome size={24} /></MIcon>Kunden</MenuItem>
                <MenuItem><MIcon><FaHandshake size={23} /></MIcon>Geschäftspartner</MenuItem>
                <MenuItem><MIcon><Truck /></MIcon>Lieferanten</MenuItem>
                <MenuItem><MIcon><People /></MIcon>Personal</MenuItem>
                <MenuItem><MIcon><Quote /></MIcon>Ansprechpartner</MenuItem>
                <MenuItem><MIcon><AddrSearch /></MIcon>Adressensuche</MenuItem>
                <MenuHead $gap>Terminplanung<Caret /></MenuHead>
                <MenuItem><MIcon><FaCalendarAlt size={22} /></MIcon>Kalender</MenuItem>
                <MenuItem $active><MIcon><PersonCal s={23} /></MIcon>Personaleinsatzplanung</MenuItem>
                <MenuHead $gap>CRM<Caret /></MenuHead>
                <MenuItem><MIcon><Tornado /></MIcon>Aktionen</MenuItem>
              </Menu>
            </SideBody>
          </Sidebar>
          <MainCol>
            <TabRow>
              <DocTab>
                <PersonCal s={16} />
                <DocTitle>Personaleinsatzplan...</DocTitle>
                <DocAct>
                  <ExternalLink size={15} strokeWidth={2.2} />
                  <X size={20} strokeWidth={2.6} />
                </DocAct>
              </DocTab>
              <TabRest />
            </TabRow>
            <Frame>
              <TopArea>
                <TabCol>
                  <SubTabs>
                    <SubTab $w={104}>Quartalsansicht</SubTab>
                    <SubTab $w={97} $active>Monatsansicht</SubTab>
                    <SubTab $w={100}>Wochenansicht</SubTab>
                    <SubTab $w={90}>Tagesansicht</SubTab>
                  </SubTabs>
                  <WhitePanel>
                    <CalRow>
                      <CalTabs>
                        <CalTab $w={73}>Vorheriger</CalTab>
                        {months.map((m) => (
                          <CalTab key={m} $w={54} $active={m === "Mai"}>{m}</CalTab>
                        ))}
                        <CalTab $w={66}>Nächster</CalTab>
                      </CalTabs>
                      <Combo $w={100} $top={1}><span>05.05.2021</span><ComboArrow /></Combo>
                      <HeuteWrap><Btn $w={53}><u>H</u>eute</Btn></HeuteWrap>
                    </CalRow>
                    <GridArea>
                      <Gantt>
                        <HeadCorner>Mai 21</HeadCorner>
                        <KwCell $span={2}>KW 17</KwCell>
                        <KwCell $span={7}>KW 18</KwCell>
                        <KwCell $span={7}>KW 19</KwCell>
                        <KwCell $span={7}>KW 20</KwCell>
                        <KwCell $span={7}>KW 21</KwCell>
                        <KwCell $span={1}>KW 2</KwCell>
                        {days.map((d) => (
                          <DayHead key={d.n}>{d.n}.<br />{d.w}</DayHead>
                        ))}
                        <GrayHead $span={2} $bold>Personal</GrayHead>
                        <GrayHead $span={1} $bold $sep>Std.Ges.</GrayHead>
                        {days.map((d) => (
                          <DayCell key={d.n} $bg={greyTint[kindOf(d.n)]} $grey />
                        ))}
                        {persons.map((p, r) => (
                          <React.Fragment key={p.id}>
                            <LeftCell $bold={p.bold}>{p.id}</LeftCell>
                            <LeftCell $bold={p.bold}>{p.name}</LeftCell>
                            <LeftCell $bold={p.bold} $right $hi={p.hi}>0:00</LeftCell>
                            {renderDayCells(r)}
                          </React.Fragment>
                        ))}
                        <GrayHead $span={2} $bold>Leistungen</GrayHead>
                        <GrayHead $span={1} $sep />
                        {days.map((d) => (
                          <DayCell key={d.n} $bg={greyTint[kindOf(d.n)]} $grey />
                        ))}
                        <GrayHead $span={3}>(Equipment)</GrayHead>
                        {days.map((d) => (
                          <DayCell key={d.n} $bg={greyTint[kindOf(d.n)]} $grey />
                        ))}
                      </Gantt>
                      <VScroll>
                        <ChevronUp size={13} strokeWidth={2} />
                        <ChevronDown size={13} strokeWidth={2} />
                      </VScroll>
                    </GridArea>
                    <HScrollBar>
                      <ChevronLeft size={12} strokeWidth={2} />
                      <HThumb $m={153} $w={17} $h={16} />
                      <Spacer />
                      <ChevronRight size={12} strokeWidth={2} />
                      <RefreshCw size={11} strokeWidth={2.4} color="#222" style={{ margin: "0 4px 0 12px" }} />
                    </HScrollBar>
                    <RedBox>
                      <FilterPanel>
                        <FCheckRow>
                          <OrangeCheck><Check size={13} strokeWidth={2} /></OrangeCheck>
                          Filter anzeigen
                        </FCheckRow>
                        <FRow>
                          <FLabel $pt={6}>Kunde</FLabel>
                          <Input $w={98}><DotsBtn>...</DotsBtn></Input>
                          <Input $w={189} $off />
                          <Input $w={0} $off />
                          <FIconWrap><FilterIcon /></FIconWrap>
                        </FRow>
                        <FRow>
                          <FLabel $pt={4}>Anlage</FLabel>
                          <Input $w={98}><DotsBtn>...</DotsBtn></Input>
                          <Input $w={189} $off />
                          <Input $w={0} $off />
                          <FIconWrap><FilterIcon /></FIconWrap>
                        </FRow>
                        <FRow>
                          <FLabel>Disp.-Gruppe</FLabel>
                          <Combo $w={98} $h={20}><span /><ComboArrow /></Combo>
                          <Input $w={0} $off />
                          <FIconWrap><FilterIcon /></FIconWrap>
                        </FRow>
                        <FRow $h={23} $mt={-2}>
                          <FLabel $pb={3}>Leistungen von</FLabel>
                          <Combo $w={99}><span>01.05.2021</span><ComboArrow /></Combo>
                          <BisLabel>bis</BisLabel>
                          <Combo $w={100}><span>31.05.2021</span><ComboArrow /></Combo>
                        </FRow>
                      </FilterPanel>
                      <InnerTabs>
                        <InnerTab $w={105} $active>Anlagenverträge</InnerTab>
                        <InnerTab $w={62}>Aufträge</InnerTab>
                      </InnerTabs>
                      <OptionRow>
                        <CheckOpt $w={336}><CheckBox />Saison berücksichtigen</CheckOpt>
                        <CheckOpt><CheckBox />Nur unvollständige</CheckOpt>
                      </OptionRow>
                      <SearchRow>
                        <Group>
                          <Legend>Suchen</Legend>
                          <Input $w={81} />
                          <Input $w={97} $off $ml={3} />
                          <ToolIcons>
                            <Search size={17} strokeWidth={2} style={{ transform: "scaleX(-1)" }} />
                            <svg width="17" height="15" viewBox="0 0 17 15"><path d="M0 0 H17 V2 H0 Z M1 4 H16 L10 10 V15 H7 V10 Z" fill="#333" /></svg>
                          </ToolIcons>
                          <NavGroup>
                            <NavIcon d="M2 1 H4 V13 H2 Z M12 1 V13 L5 7 Z" />
                            <NavIcon d="M10 1 V13 L3 7 Z" />
                            <NavIcon d="M4 1 V13 L11 7 Z" />
                            <NavIcon d="M10 1 H12 V13 H10 Z M2 1 V13 L9 7 Z" />
                            <RefreshCw size={14} strokeWidth={2.2} color="#444" />
                          </NavGroup>
                          <ToolIcons><GridFilterIcon /></ToolIcons>
                        </Group>
                        <GoBox><Btn $w={75} $h={22}>Gehe zu</Btn></GoBox>
                      </SearchRow>
                      <TableWrap>
                        <TableMain>
                          <TGrid>
                            <TIndicator />
                            {tableCols.map((c) => <THead key={c}>{c}</THead>)}
                            {tableRows.map((row, i) => (
                              <React.Fragment key={row[0]}>
                                <TIndicator>
                                  {i === 0 ? <svg width="7" height="11" viewBox="0 0 7 11"><path d="M0 0 L7 5.5 L0 11 Z" fill="#000" /></svg> : null}
                                </TIndicator>
                                {row.map((v, j) => <TCell key={j} $r={rightCols.includes(j)}>{v}</TCell>)}
                              </React.Fragment>
                            ))}
                          </TGrid>
                          <TScroll>
                            <ChevronLeft size={11} strokeWidth={2} />
                            <HThumb $m={4} $w={17} $h={15} />
                            <Spacer />
                            <ChevronRight size={11} strokeWidth={2} style={{ marginRight: 4 }} />
                          </TScroll>
                        </TableMain>
                        <TVScroll>
                          <ChevronUp size={11} strokeWidth={2} />
                          <TVThumb />
                          <DownArrow><ChevronDown size={12} strokeWidth={2} /></DownArrow>
                        </TVScroll>
                      </TableWrap>
                      <ApplyRow>
                        <Btn $w={100}>Über<u>n</u>ehmen</Btn>
                      </ApplyRow>
                    </RedBox>
                  </WhitePanel>
                </TabCol>
                <AnzeigeRail>
                  <Chevs>&lt;&lt;</Chevs>
                  {"Anzeige".split("").map((l, i) => <VLetter key={i}>{l}</VLetter>)}
                </AnzeigeRail>
              </TopArea>
              <BottomBar>
                <StatusBox />
                <Btn $w={49} $h={22}><u>M</u>enü</Btn>
                <Btn $w={59} $h={22}><u>D</u>rucken</Btn>
                <Btn $w={69} $h={22}><u>S</u>chließen</Btn>
              </BottomBar>
            </Frame>
            <Footer>
              <FootIcon $w={20}><FaStopwatch size={15} color={DARK} /></FootIcon>
              <FootIcon $w={22} $ml={10}><Building /></FootIcon>
              <FootIcon $w={20} $ml={12}><FaPhoneAlt size={14} color="#bbb" style={{ transform: "scaleX(-1)" }} /></FootIcon>
              <FootIcon $w={18} $ml={14}><FaLock size={15} color="#333" /></FootIcon>
              <FootIcon $w={18} $ml={6}><Db /></FootIcon>
            </Footer>
          </MainCol>
        </Body>
      </Win>
    </>
  );
}
